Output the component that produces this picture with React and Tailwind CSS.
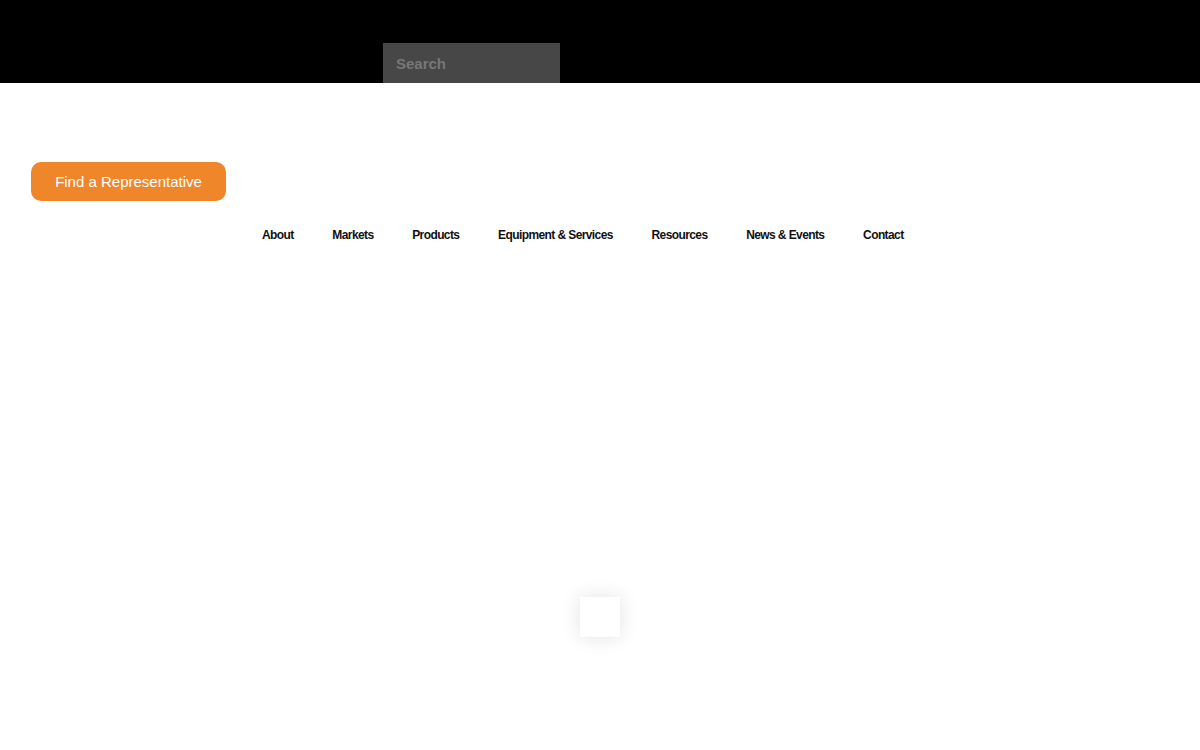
import React from 'react';

const navItems = ['About', 'Markets', 'Products', 'Equipment & Services', 'Resources', 'News & Events', 'Contact'];

export default function App() {
  return (
    <div className="w-[1200px] h-[750px] bg-white overflow-hidden font-['Liberation_Sans',Arial,sans-serif]">
      <header className="h-[83px] bg-black flex items-end">
        <div className="ml-[383px] w-[177px] h-[40px] bg-[#474747] flex items-center pl-[13px] pt-[2px]">
          <span className="text-[15px] font-bold text-[#777777]">Search</span>
        </div>
      </header>

      <div className="pl-[31px] pt-[79px]">
        <button className="w-[195px] h-[39px] rounded-[10px] bg-[#f0862a] text-white text-[15px] flex items-center justify-center pt-[2px]">
          Find a Representative
        </button>
      </div>

      <nav className="pl-[262px] pt-[27px] flex gap-[38.7px]">
        {navItems.map((item) => (
          <a key={item} className="text-[12px] font-bold text-[#111111] tracking-[-0.6px] leading-[14px]">
            {item}
          </a>
        ))}
      </nav>

      <div className="flex justify-center pt-[355px]">
        <div className="w-[40px] h-[40px] bg-white shadow-[0_0_20px_rgba(0,0,0,0.12)]"></div>
      </div>
    </div>
  );
}
